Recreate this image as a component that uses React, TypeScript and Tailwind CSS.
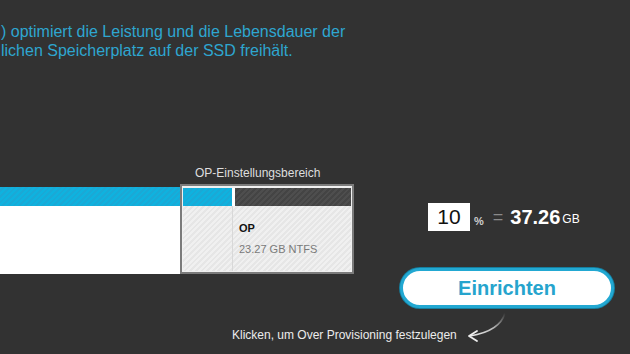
import React from "react";

export default function App() {
  const font = { fontFamily: '"Liberation Sans", Arial, sans-serif' };
  return (
    <div
      className="relative w-[630px] h-[354px] overflow-hidden bg-[#323232]"
      style={font}
    >
      <div className="pt-[22px] text-[16px] leading-[19px] text-[#2ea6d0] whitespace-nowrap">
        <div className="ml-[1px]">) optimiert die Leistung und die Lebensdauer der</div>
        <div className="ml-[1px]">lichen Speicherplatz auf der SSD freihält.</div>
      </div>

      <div className="flex mt-[106px]">
        <div className="flex flex-col w-[400px]">
          <div className="pl-[195px] h-[14px] text-[12px] leading-[14px] text-[#dedede]">
            OP-Einstellungsbereich
          </div>
          <div className="flex mt-[4px]">
            <div className="w-[180px] mt-[3px] flex flex-col h-[87px]">
              <div className="h-[19px] bg-[repeating-linear-gradient(135deg,#0fb2df_0px,#0fb2df_2px,#1aa9d6_2px,#1aa9d6_4px)]" />
              <div className="flex-1 bg-white" />
            </div>
            <div className="w-[174px] h-[90px] border-2 border-[#7b7b7b] p-px bg-[#f0f0f0] flex flex-col">
              <div className="flex h-[18px] mt-px">
                <div className="w-[49px] bg-[repeating-linear-gradient(135deg,#0fb2df_0px,#0fb2df_2px,#1aa9d6_2px,#1aa9d6_4px)]" />
                <div className="w-[3px] bg-white" />
                <div className="flex-1 bg-[repeating-linear-gradient(135deg,#4e4e4e_0px,#4e4e4e_2px,#444444_2px,#444444_4px)]" />
              </div>
              <div className="flex flex-1 bg-[repeating-linear-gradient(135deg,#f0f0f0_0px,#f0f0f0_2px,#e6e6e6_2px,#e6e6e6_4px)]">
                <div className="w-[50px] border-r border-[#d8d8d8]" />
                <div className="pl-[6px] pt-[16px]">
                  <div className="text-[11px] leading-[13px] font-bold text-[#111]">OP</div>
                  <div className="mt-[8px] text-[11px] leading-[13px] text-[#7a7a7a]">23.27 GB NTFS</div>
                </div>
              </div>
            </div>
          </div>
        </div>

        <div className="flex flex-col pt-[37px]">
          <div className="flex items-center h-[28px] pl-[28px]">
            <div className="w-[42px] h-[28px] bg-white flex items-center justify-center text-[21px] text-[#111]">
              10
            </div>
            <span className="ml-[4px] mt-[8px] text-[11px] font-bold text-[#cfcfcf]">%</span>
            <span className="ml-[9px] text-[18px] text-[#8a8a8a]">=</span>
            <span className="ml-[7px] text-[20px] font-bold text-white">37.26</span>
            <span className="ml-[2px] mt-[3px] text-[12px] text-white">GB</span>
          </div>
          <div className="mt-[37px] w-[214px] h-[40px] rounded-full bg-white border-[3px] border-[#22a8d2] ring-1 ring-[#157f9f] flex items-center justify-center">
            <span className="text-[20px] font-bold text-[#26a4cd]">Einrichten</span>
          </div>
        </div>
      </div>

      <div className="mt-[20px] pl-[232px] text-[12px] leading-[14px] text-[#ececec] whitespace-nowrap">
        Klicken, um Over Provisioning festzulegen
      </div>

      <svg
        className="absolute left-[464px] top-[311px]"
        width="50"
        height="32"
        viewBox="0 0 50 32"
      >
        <defs>
          <linearGradient id="ar" x1="1" y1="0" x2="0" y2="1">
            <stop offset="0" stopColor="#dcdcdc" stopOpacity="0" />
            <stop offset="0.5" stopColor="#dcdcdc" stopOpacity="0.8" />
            <stop offset="1" stopColor="#eeeeee" stopOpacity="1" />
          </linearGradient>
        </defs>
        <path d="M41 2 Q36 20 6 25" stroke="url(#ar)" strokeWidth="1.6" fill="none" />
        <path d="M13 20 L5 25 L13 30" stroke="#eeeeee" strokeWidth="1.8" fill="none" strokeLinecap="round" strokeLinejoin="round" />
      </svg>
    </div>
  );
}
